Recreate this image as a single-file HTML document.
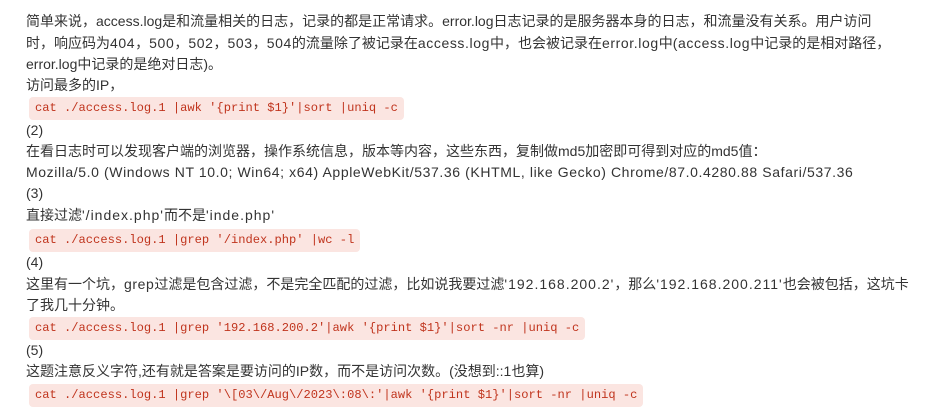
<!DOCTYPE html>
<html><head><meta charset="utf-8"><style>
body{margin:0;width:925px;height:415px;background:#fff;overflow:hidden;font-family:"Liberation Sans","Noto Sans CJK SC",sans-serif;font-size:14px;color:#333}
.l{position:absolute;left:26px;white-space:nowrap;line-height:21px}
.e{letter-spacing:.6px}
.c{position:absolute;left:29px;height:23px;line-height:23px;padding:0 6px;background:#fbe5e1;border-radius:4px;color:#c0341d;font-family:"Liberation Mono","DejaVu Sans Mono",monospace;font-size:12.1px;white-space:pre}
</style></head><body>
<div class="l" style="top:11px">简单来说，access.log是和流量相关的日志，记录的都是正常请求。error.log日志记录的是服务器本身的日志，和流量没有关系。用户访问</div>
<div class="l" style="top:33px">时，响应码为<span class="e">404</span>，<span class="e">500</span>，<span class="e">502</span>，<span class="e">503</span>，<span class="e">504</span>的流量除了被记录在<span class="e">access.log</span>中，也会被记录在<span class="e">error.log</span>中<span class="e">(access.log</span>中记录的是相对路径，</div>
<div class="l" style="top:54px">error.log中记录的是绝对日志)。</div>
<div class="l" style="top:75px">访问最多的IP，</div>
<div class="c" style="top:97px">cat ./access.log.1 |awk '{print $1}'|sort |uniq -c</div>
<div class="l" style="top:120px">(2)</div>
<div class="l" style="top:141px">在看日志时可以发现客户端的浏览器，操作系统信息，版本等内容，这些东西，复制做md5加密即可得到对应的md5值：</div>
<div class="l e" style="top:162px">Mozilla/5.0 (Windows NT 10.0; Win64; x64) AppleWebKit/537.36 (KHTML, like Gecko) Chrome/87.0.4280.88 Safari/537.36</div>
<div class="l" style="top:183px">(3)</div>
<div class="l" style="top:205px">直接过滤<span class="e" style="letter-spacing:1px">'/index.php'</span>而不是<span class="e" style="letter-spacing:1px">'inde.php'</span></div>
<div class="c" style="top:229px">cat ./access.log.1 |grep '/index.php' |wc -l</div>
<div class="l" style="top:252px">(4)</div>
<div class="l" style="top:274px">这里有一个坑，<span class="e">grep</span>过滤是包含过滤，不是完全匹配的过滤，比如说我要过滤<span class="e" style="letter-spacing:1px">'192.168.200.2'</span>，那么<span class="e" style="letter-spacing:1px">'192.168.200.211'</span>也会被包括，这坑卡</div>
<div class="l" style="top:295px">了我几十分钟。</div>
<div class="c" style="top:317px">cat ./access.log.1 |grep '192.168.200.2'|awk '{print $1}'|sort -nr |uniq -c</div>
<div class="l" style="top:340px">(5)</div>
<div class="l" style="top:361px">这题注意反义字符,还有就是答案是要访问的IP数，而不是访问次数。(没想到::1也算)</div>
<div class="c" style="top:384px">cat ./access.log.1 |grep '\[03\/Aug\/2023\:08\:'|awk '{print $1}'|sort -nr |uniq -c</div>
</body></html>
